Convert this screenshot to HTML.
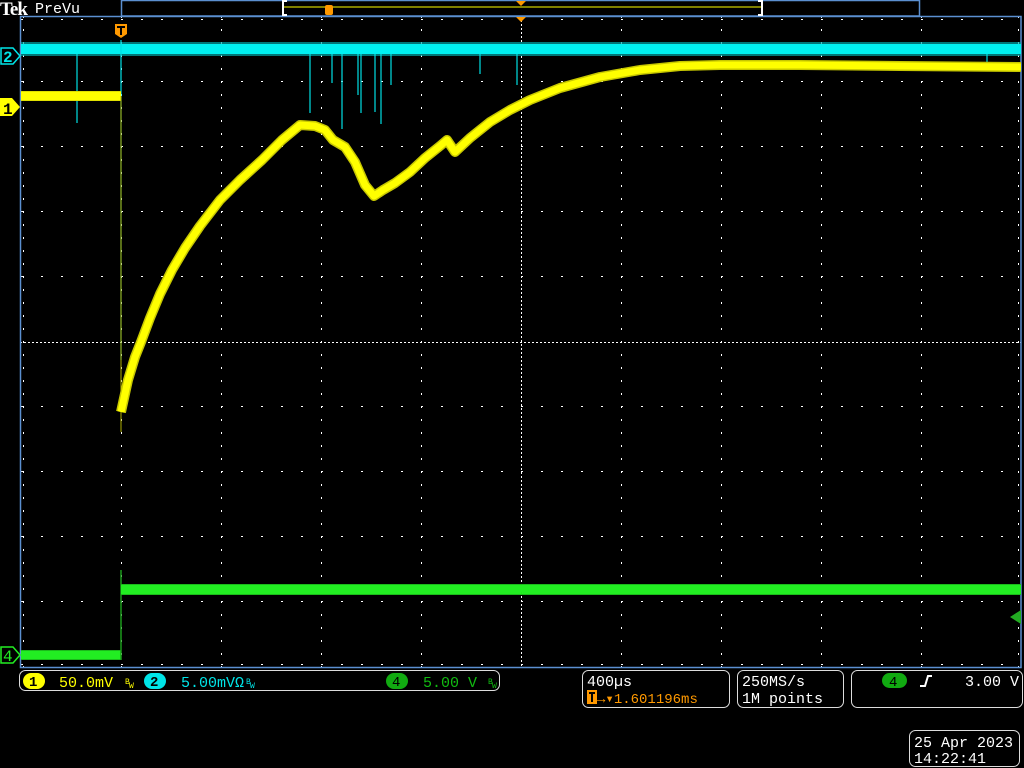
<!DOCTYPE html>
<html><head><meta charset="utf-8"><style>
html,body{margin:0;padding:0;background:#000;width:1024px;height:768px;overflow:hidden}
svg{display:block}
text{font-family:"Liberation Mono","DejaVu Sans Mono",monospace}
</style></head><body>
<svg width="1024" height="768" viewBox="0 0 1024 768" xmlns="http://www.w3.org/2000/svg">
<defs>
<pattern id="hd" x="1" y="0" width="20" height="1" patternUnits="userSpaceOnUse"><rect x="0" width="2" height="1" fill="#fff"/></pattern>
<pattern id="vd" x="0" y="3" width="1" height="13" patternUnits="userSpaceOnUse"><rect y="0" width="1" height="2" fill="#fff"/></pattern>
<pattern id="cd" x="0" y="0" width="4" height="1" patternUnits="userSpaceOnUse"><rect width="2" height="1" fill="#fff"/></pattern>
<pattern id="cdv" x="0" y="0" width="1" height="4" patternUnits="userSpaceOnUse"><rect width="1" height="2" fill="#fff"/></pattern>
<pattern id="nz" x="0" y="0" width="7" height="2" patternUnits="userSpaceOnUse"><rect width="2" height="2" fill="#fff"/></pattern>
</defs>
<rect width="1024" height="768" fill="#000"/>
<g>
<rect x="21" y="81" width="1000" height="1" fill="url(#hd)"/>
<rect x="21" y="146" width="1000" height="1" fill="url(#hd)"/>
<rect x="21" y="211" width="1000" height="1" fill="url(#hd)"/>
<rect x="21" y="276" width="1000" height="1" fill="url(#hd)"/>
<rect x="21" y="406" width="1000" height="1" fill="url(#hd)"/>
<rect x="21" y="471" width="1000" height="1" fill="url(#hd)"/>
<rect x="21" y="536" width="1000" height="1" fill="url(#hd)"/>
<rect x="21" y="601" width="1000" height="1" fill="url(#hd)"/>
<rect x="21" y="19" width="1000" height="1" fill="url(#hd)"/>
<rect x="21" y="664" width="1000" height="1" fill="url(#hd)"/>
<rect x="121" y="17" width="1" height="650" fill="url(#vd)"/>
<rect x="221" y="17" width="1" height="650" fill="url(#vd)"/>
<rect x="321" y="17" width="1" height="650" fill="url(#vd)"/>
<rect x="421" y="17" width="1" height="650" fill="url(#vd)"/>
<rect x="621" y="17" width="1" height="650" fill="url(#vd)"/>
<rect x="721" y="17" width="1" height="650" fill="url(#vd)"/>
<rect x="821" y="17" width="1" height="650" fill="url(#vd)"/>
<rect x="921" y="17" width="1" height="650" fill="url(#vd)"/>
<rect x="23" y="17" width="1" height="650" fill="url(#vd)"/>
<rect x="1018" y="17" width="1" height="650" fill="url(#vd)"/>
<rect x="21" y="342" width="1000" height="1" fill="url(#cd)"/>
<rect x="521" y="17" width="1" height="650" fill="url(#cdv)"/>
</g>
<rect x="20.5" y="16.5" width="1000.5" height="651" fill="none" stroke="#5b8fd0" stroke-width="1.5"/>
<rect x="121.5" y="0.5" width="798" height="15.5" fill="#000" stroke="#5b8fd0" stroke-width="1.5"/>
<line x1="283" y1="7" x2="762" y2="7" stroke="#ffff00" stroke-width="1"/>
<path d="M287 1 H283 V15 H287" fill="none" stroke="#fff" stroke-width="2"/>
<path d="M758 1 H762 V15 H758" fill="none" stroke="#fff" stroke-width="2"/>
<rect x="325" y="5" width="8" height="10" rx="2" fill="#ff9900"/>
<path d="M516 1 L526 1 L521 6 Z" fill="#ff9900"/>
<path d="M516 17 L526 17 L521 22 Z" fill="#ff9900"/>
<path d="M115 24 H127 V34 L121 38 L115 34 Z" fill="#ff9900"/>
<path d="M117 27 H125 M121 27 V35" stroke="#000" stroke-width="2"/>
<text x="0" y="15" font-weight="bold" font-size="19" fill="#fff" style="font-family:'Liberation Serif',serif;letter-spacing:-1px">Tek</text>
<text x="35" y="13" font-size="15" fill="#fff">PreVu</text>
<!-- cyan trace -->
<rect x="21" y="42" width="1000" height="14" fill="#00a8aa" opacity="0.7"/>
<rect x="21" y="44" width="1000" height="10" fill="#00f0f0"/>
<g stroke="#00e0e4" stroke-width="1.2">
<line x1="77" y1="54" x2="77" y2="123"/>
<line x1="121" y1="40" x2="121" y2="360"/>
<line x1="310" y1="54" x2="310" y2="113"/>
<line x1="332" y1="54" x2="332" y2="83"/>
<line x1="342" y1="54" x2="342" y2="129"/>
<line x1="358" y1="54" x2="358" y2="95"/>
<line x1="361" y1="54" x2="361" y2="113"/>
<line x1="375" y1="54" x2="375" y2="112"/>
<line x1="381" y1="54" x2="381" y2="124"/>
<line x1="391" y1="54" x2="391" y2="85"/>
<line x1="480" y1="54" x2="480" y2="74"/>
<line x1="517" y1="54" x2="517" y2="85"/>
<line x1="987" y1="54" x2="987" y2="70"/>
</g>
<!-- yellow trace -->
<rect x="21" y="91" width="100" height="10" fill="#e0e000"/>
<rect x="21" y="92" width="100" height="8" fill="#ffff00"/>
<line x1="121" y1="96" x2="121" y2="432" stroke="#b0b000" stroke-width="1"/>
<path d="M121 412 L128 380 L135 357 L141 342 L150 318 L160 294 L172 270 L185 248 L200 226 L220 200 L240 180 L262 160 L282 140 L300 125 L315 126 L325 130 L333 140 L345 147 L355 162 L365 185 L374 196 L383 190 L395 183 L410 172 L425 158 L440 146 L447 140 L455 152 L470 138 L490 122 L510 110 L530 100 L560 88 L600 77 L640 70 L680 66 L720 65 L800 65 L900 66 L1021 67" fill="none" stroke="#c8c800" stroke-width="10" stroke-linejoin="round"/>
<path d="M121 412 L128 380 L135 357 L141 342 L150 318 L160 294 L172 270 L185 248 L200 226 L220 200 L240 180 L262 160 L282 140 L300 125 L315 126 L325 130 L333 140 L345 147 L355 162 L365 185 L374 196 L383 190 L395 183 L410 172 L425 158 L440 146 L447 140 L455 152 L470 138 L490 122 L510 110 L530 100 L560 88 L600 77 L640 70 L680 66 L720 65 L800 65 L900 66 L1021 67" fill="none" stroke="#ffff00" stroke-width="7" stroke-linejoin="round"/>
<!-- green trace -->
<rect x="21" y="650" width="100" height="10" fill="#1bbb1b"/>
<rect x="21" y="651" width="100" height="8" fill="#22ee22"/>
<line x1="121" y1="570" x2="121" y2="660" stroke="#1a9a1a" stroke-width="1.5"/>
<rect x="121" y="584" width="900" height="11" fill="#1bbb1b"/>
<rect x="121" y="585" width="900" height="9" fill="#22ee22"/>
<path d="M1021 610 L1010 617 L1021 624 Z" fill="#22aa22"/>
<!-- channel markers -->
<path d="M1 48 H13 L20 56 L13 64 H1 Z" fill="#000" stroke="#00e5e8" stroke-width="1.5"/>
<text x="3" y="62" font-size="16" fill="#00e5e8" font-weight="bold">2</text>
<path d="M0 98 H12 L20 107 L12 116 H0 Z" fill="#ffff00"/>
<text x="3" y="114" font-size="16" fill="#000" font-weight="bold">1</text>
<path d="M1 647 H13 L20 655 L13 663 H1 Z" fill="#000" stroke="#22ee22" stroke-width="1.5"/>
<text x="3" y="661" font-size="16" fill="#22ee22">4</text>
<!-- bottom bar -->
<rect x="19.5" y="670.5" width="480" height="20" rx="6" fill="none" stroke="#ddd" stroke-width="1"/>
<rect x="23" y="673" width="22" height="16" rx="8" fill="#ffff00"/>
<text x="29" y="686" font-size="14" fill="#000" font-weight="bold">1</text>
<text x="59" y="687" font-size="15" fill="#ffff00">50.0mV</text>
<text x="125" y="684" font-size="8" fill="#ffff00">B</text><text x="129" y="688" font-size="8" fill="#ffff00">W</text>
<rect x="144" y="673" width="22" height="16" rx="8" fill="#00e5e8"/>
<text x="150" y="686" font-size="14" fill="#000" font-weight="bold">2</text>
<text x="181" y="687" font-size="15" fill="#00e5e8">5.00mVΩ</text>
<text x="246" y="684" font-size="8" fill="#00e5e8">B</text><text x="250" y="688" font-size="8" fill="#00e5e8">W</text>
<rect x="386" y="673" width="22" height="16" rx="8" fill="#11aa11"/>
<text x="392" y="686" font-size="14" fill="#000">4</text>
<text x="423" y="687" font-size="15" fill="#11bb11">5.00 V</text>
<text x="488" y="684" font-size="8" fill="#11bb11">B</text><text x="492" y="688" font-size="8" fill="#11bb11">W</text>
<rect x="582.5" y="670.5" width="147" height="37" rx="6" fill="none" stroke="#ddd" stroke-width="1"/>
<text x="587" y="686" font-size="15" fill="#fff">400µs</text>
<rect x="587" y="690" width="10" height="14" fill="#ff9900"/>
<path d="M589 693 H595 M592 693 V702" stroke="#000" stroke-width="2"/>
<text x="597" y="703" font-size="14" fill="#ff9900">→▾1.601196ms</text>
<rect x="737.5" y="670.5" width="106" height="37" rx="6" fill="none" stroke="#ddd" stroke-width="1"/>
<text x="742" y="686" font-size="15" fill="#fff">250MS/s</text>
<text x="742" y="703" font-size="15" fill="#fff">1M points</text>
<rect x="851.5" y="670.5" width="171" height="37" rx="6" fill="none" stroke="#ddd" stroke-width="1"/>
<rect x="882" y="673" width="25" height="15" rx="7.5" fill="#11aa11"/>
<text x="889" y="686" font-size="14" fill="#000">4</text>
<path d="M920 686 H925 L928 676 H932" fill="none" stroke="#fff" stroke-width="2"/>
<text x="965" y="686" font-size="15" fill="#fff">3.00 V</text>
<rect x="909.5" y="730.5" width="110" height="36" rx="6" fill="none" stroke="#ddd" stroke-width="1"/>
<text x="914" y="747" font-size="15" fill="#fff">25 Apr 2023</text>
<text x="914" y="763" font-size="15" fill="#fff">14:22:41</text>
</svg>
</body></html>
